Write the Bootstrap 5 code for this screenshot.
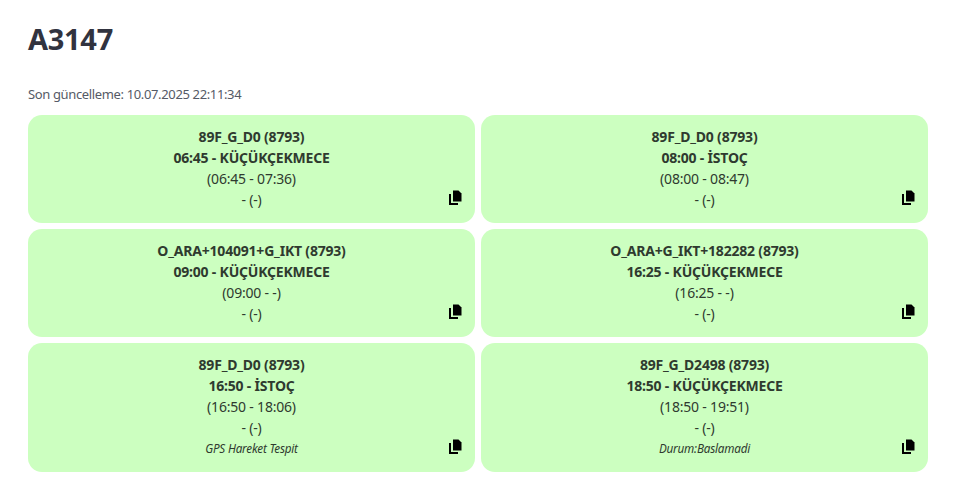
<!DOCTYPE html>
<html lang="tr">
    <head>
        <meta charset="UTF-8">
        <title>A3147</title>
        <link href="https://cdn.jsdelivr.net/npm/bootstrap@5.3.0/dist/css/bootstrap.min.css" rel="stylesheet">
        <style>
            body { font-family: "Noto Sans", "Lato", sans-serif; color: #31333f; background: #fff; }
            .sayfa { padding: 20px 37px 0 28px; }
            .baslik { font-size: 29px; font-weight: 700; line-height: 38px; margin: 0 0 26px; color: #31333f; letter-spacing: -0.3px; }
            .guncelleme { font-size: 13px; line-height: 20px; color: #555a66; margin-bottom: 11px; letter-spacing: -0.36px; }
            .sefer-grid { display: grid; grid-template-columns: 1fr 1fr; gap: 6px; }
            .sefer { background: #ccffc0; border-radius: 14px; padding: 11px 12px 13px; text-align: center; font-size: 14px; line-height: 21px; position: relative; color: #2f3a2f; letter-spacing: -0.2px; }
            .durum { font-size: 11.7px; font-style: italic; }
            .kopya { position: absolute; right: 12px; bottom: 17px; width: 16px; height: 16px; }
        </style>
    </head>
    <body>
        <div class="sayfa">
            <h1 class="baslik">A3147</h1>
            <div class="guncelleme">Son güncelleme: 10.07.2025 22:11:34</div>
            <div class="sefer-grid">
                <div class="sefer">
                    <div class="fw-bold">89F_G_D0 (8793)</div>
                    <div class="fw-bold">06:45 - KÜÇÜKÇEKMECE</div>
                    <div>(06:45 - 07:36)</div>
                    <div>- (-)</div>
                    <svg class="kopya" viewBox="0 0 16 16"><path d="M6 0.5h5.5l3 3V11.5H6z" fill="#000"/><path d="M2 4h2v9h7v2H2z" fill="#000"/></svg>
                </div>
                <div class="sefer">
                    <div class="fw-bold">89F_D_D0 (8793)</div>
                    <div class="fw-bold">08:00 - İSTOÇ</div>
                    <div>(08:00 - 08:47)</div>
                    <div>- (-)</div>
                    <svg class="kopya" viewBox="0 0 16 16"><path d="M6 0.5h5.5l3 3V11.5H6z" fill="#000"/><path d="M2 4h2v9h7v2H2z" fill="#000"/></svg>
                </div>
                <div class="sefer">
                    <div class="fw-bold">O_ARA+104091+G_IKT (8793)</div>
                    <div class="fw-bold">09:00 - KÜÇÜKÇEKMECE</div>
                    <div>(09:00 - -)</div>
                    <div>- (-)</div>
                    <svg class="kopya" viewBox="0 0 16 16"><path d="M6 0.5h5.5l3 3V11.5H6z" fill="#000"/><path d="M2 4h2v9h7v2H2z" fill="#000"/></svg>
                </div>
                <div class="sefer">
                    <div class="fw-bold">O_ARA+G_IKT+182282 (8793)</div>
                    <div class="fw-bold">16:25 - KÜÇÜKÇEKMECE</div>
                    <div>(16:25 - -)</div>
                    <div>- (-)</div>
                    <svg class="kopya" viewBox="0 0 16 16"><path d="M6 0.5h5.5l3 3V11.5H6z" fill="#000"/><path d="M2 4h2v9h7v2H2z" fill="#000"/></svg>
                </div>
                <div class="sefer">
                    <div class="fw-bold">89F_D_D0 (8793)</div>
                    <div class="fw-bold">16:50 - İSTOÇ</div>
                    <div>(16:50 - 18:06)</div>
                    <div>- (-)</div>
                    <div class="durum">GPS Hareket Tespit</div>
                    <svg class="kopya" viewBox="0 0 16 16"><path d="M6 0.5h5.5l3 3V11.5H6z" fill="#000"/><path d="M2 4h2v9h7v2H2z" fill="#000"/></svg>
                </div>
                <div class="sefer">
                    <div class="fw-bold">89F_G_D2498 (8793)</div>
                    <div class="fw-bold">18:50 - KÜÇÜKÇEKMECE</div>
                    <div>(18:50 - 19:51)</div>
                    <div>- (-)</div>
                    <div class="durum">Durum:Baslamadi</div>
                    <svg class="kopya" viewBox="0 0 16 16"><path d="M6 0.5h5.5l3 3V11.5H6z" fill="#000"/><path d="M2 4h2v9h7v2H2z" fill="#000"/></svg>
                </div>
            </div>
        </div>
        <script src="https://cdn.jsdelivr.net/npm/bootstrap@5.3.0/dist/js/bootstrap.bundle.min.js"></script>
    </body>
</html>
